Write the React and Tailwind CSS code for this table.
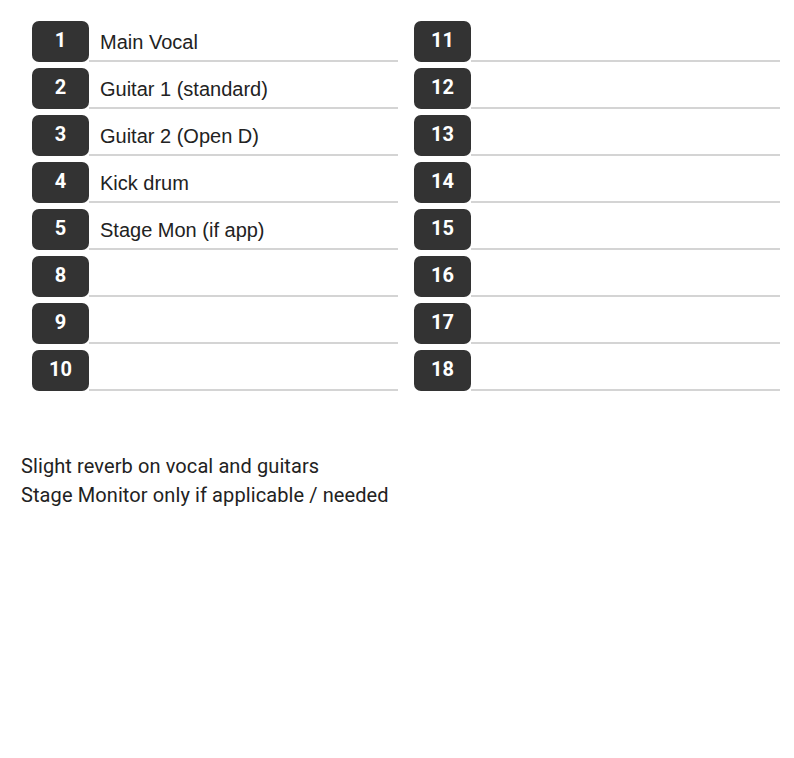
import React from 'react';

const left = [
  { n: 1, label: 'Main Vocal' },
  { n: 2, label: 'Guitar 1 (standard)' },
  { n: 3, label: 'Guitar 2 (Open D)' },
  { n: 4, label: 'Kick drum' },
  { n: 5, label: 'Stage Mon (if app)' },
  { n: 8, label: '' },
  { n: 9, label: '' },
  { n: 10, label: '' },
];

const right = [11, 12, 13, 14, 15, 16, 17, 18].map((n) => ({ n, label: '' }));

const Row = ({ n, label }) => (
  <div className="flex h-[41px] mb-[6px]">
    <div className="w-[57px] h-full shrink-0 rounded-[7px] bg-[#333333] text-white font-bold text-[20px] flex items-center justify-center pb-[3px] font-['Roboto',sans-serif]">
      {n}
    </div>
    <div className="flex-1 border-b-2 border-[#d4d4d4] flex items-center pl-[11px] pt-[3px] text-[20px] text-[#222] font-['Liberation_Sans',Arial,sans-serif]">
      {label}
    </div>
  </div>
);

const App = () => {
  return (
    <div className="min-h-[758px] w-[794px] bg-white">
      <div className="pl-8 pt-[21px] flex gap-4">
        <div className="w-[366px]">
          {left.map((r) => (
            <Row key={r.n} {...r} />
          ))}
        </div>
        <div className="w-[366px]">
          {right.map((r) => (
            <Row key={r.n} {...r} />
          ))}
        </div>
      </div>
      <div className="px-[21px] mt-[55px] text-[20px] leading-[29px] tracking-[0.1px] text-[#222] font-['Roboto',sans-serif]">
        <p>Slight reverb on vocal and guitars</p>
        <p>Stage Monitor only if applicable / needed</p>
      </div>
    </div>
  );
};

export default App;
